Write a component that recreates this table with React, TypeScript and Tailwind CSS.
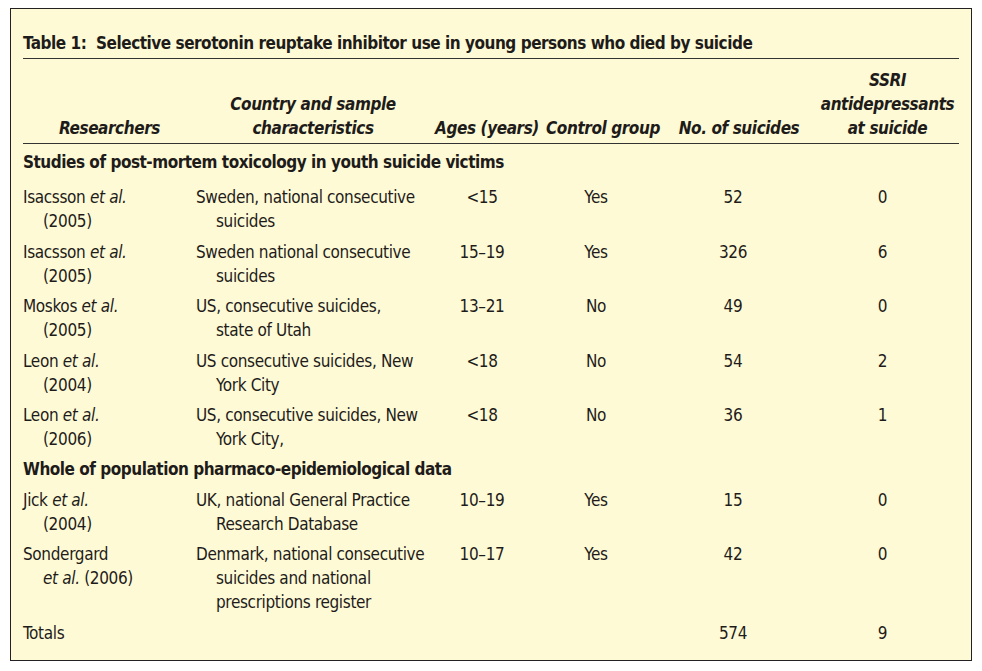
import React from 'react';

type Row = {
  who: React.ReactNode[];
  where: string[];
  ages: string;
  control: string;
  n: string;
  ssri: string;
};

const Et = () => <i>et al.</i>;

const toxRows: Row[] = [
  { who: [<>Isacsson <Et /></>, '(2005)'], where: ['Sweden, national consecutive', 'suicides'], ages: '<15', control: 'Yes', n: '52', ssri: '0' },
  { who: [<>Isacsson <Et /></>, '(2005)'], where: ['Sweden national consecutive', 'suicides'], ages: '15–19', control: 'Yes', n: '326', ssri: '6' },
  { who: [<>Moskos <Et /></>, '(2005)'], where: ['US, consecutive suicides,', 'state of Utah'], ages: '13–21', control: 'No', n: '49', ssri: '0' },
  { who: [<>Leon <Et /></>, '(2004)'], where: ['US consecutive suicides, New', 'York City'], ages: '<18', control: 'No', n: '54', ssri: '2' },
  { who: [<>Leon <Et /></>, '(2006)'], where: ['US, consecutive suicides, New', 'York City,'], ages: '<18', control: 'No', n: '36', ssri: '1' },
];

const popRows: Row[] = [
  { who: [<>Jick <Et /></>, '(2004)'], where: ['UK, national General Practice', 'Research Database'], ages: '10–19', control: 'Yes', n: '15', ssri: '0' },
  { who: ['Sondergard', <><Et /> (2006)</>], where: ['Denmark, national consecutive', 'suicides and national', 'prescriptions register'], ages: '10–17', control: 'Yes', n: '42', ssri: '0' },
];

const grid = 'grid grid-cols-[173px_234px_114px_118px_154px_1fr] whitespace-nowrap';

function Lines({ items }: { items: React.ReactNode[] }) {
  return (
    <div>
      {items.map((t, i) => (
        <div key={i} className={i > 0 ? 'pl-[20px]' : ''}>{t}</div>
      ))}
    </div>
  );
}

function DataRow({ r }: { r: Row }) {
  return (
    <div className={`${grid} pt-[6.5px]`}>
      <Lines items={r.who} />
      <Lines items={r.where} />
      <div className="text-center pr-[10px]">{r.ages}</div>
      <div className="text-center pr-[14px]">{r.control}</div>
      <div className="text-center pr-[12px]">{r.n}</div>
      <div className="text-center pr-[10px]">{r.ssri}</div>
    </div>
  );
}

export default function App() {
  return (
    <div className="w-[982px] h-[671px] bg-white pt-[8px] pl-[10px]">
      <div
        className="w-[962px] h-[653px] border border-[#222] bg-[#fffad6] px-[12px] text-[17px] leading-[24px] tracking-[-0.35px] text-[#1e1c1a]"
        style={{ fontFamily: '"Liberation Sans Narrow", "DejaVu Sans Condensed", "Liberation Sans", sans-serif' }}
      >
        {/* title */}
        <div className="pt-[22px] pb-[3px] border-b border-[#333] font-bold tracking-[-0.48px] whitespace-pre">
          {'Table 1:  Selective serotonin reuptake inhibitor use in young persons who died by suicide'}
        </div>

        {/* column headings */}
        <div className={`${grid} items-end pt-[9px] pb-[3px] border-b border-[#333] font-bold italic text-center tracking-[-0.42px]`}>
          <div>Researchers</div>
          <div>Country and sample<br />characteristics</div>
          <div>Ages (years)</div>
          <div>Control group</div>
          <div>No. of suicides</div>
          <div>SSRI<br />antidepressants<br />at suicide</div>
        </div>

        <div className="pt-[6px] pb-[4.5px] font-bold tracking-[-0.48px]">Studies of post-mortem toxicology in youth suicide victims</div>
        {toxRows.map((r, i) => <DataRow key={i} r={r} />)}

        <div className="pt-[6px] font-bold tracking-[-0.48px]">Whole of population pharmaco-epidemiological data</div>
        {popRows.map((r, i) => <DataRow key={i} r={r} />)}

        <div className={`${grid} pt-[6.5px]`}>
          <div>Totals</div>
          <div />
          <div />
          <div />
          <div className="text-center pr-[12px]">574</div>
          <div className="text-center pr-[10px]">9</div>
        </div>
      </div>
    </div>
  );
}
